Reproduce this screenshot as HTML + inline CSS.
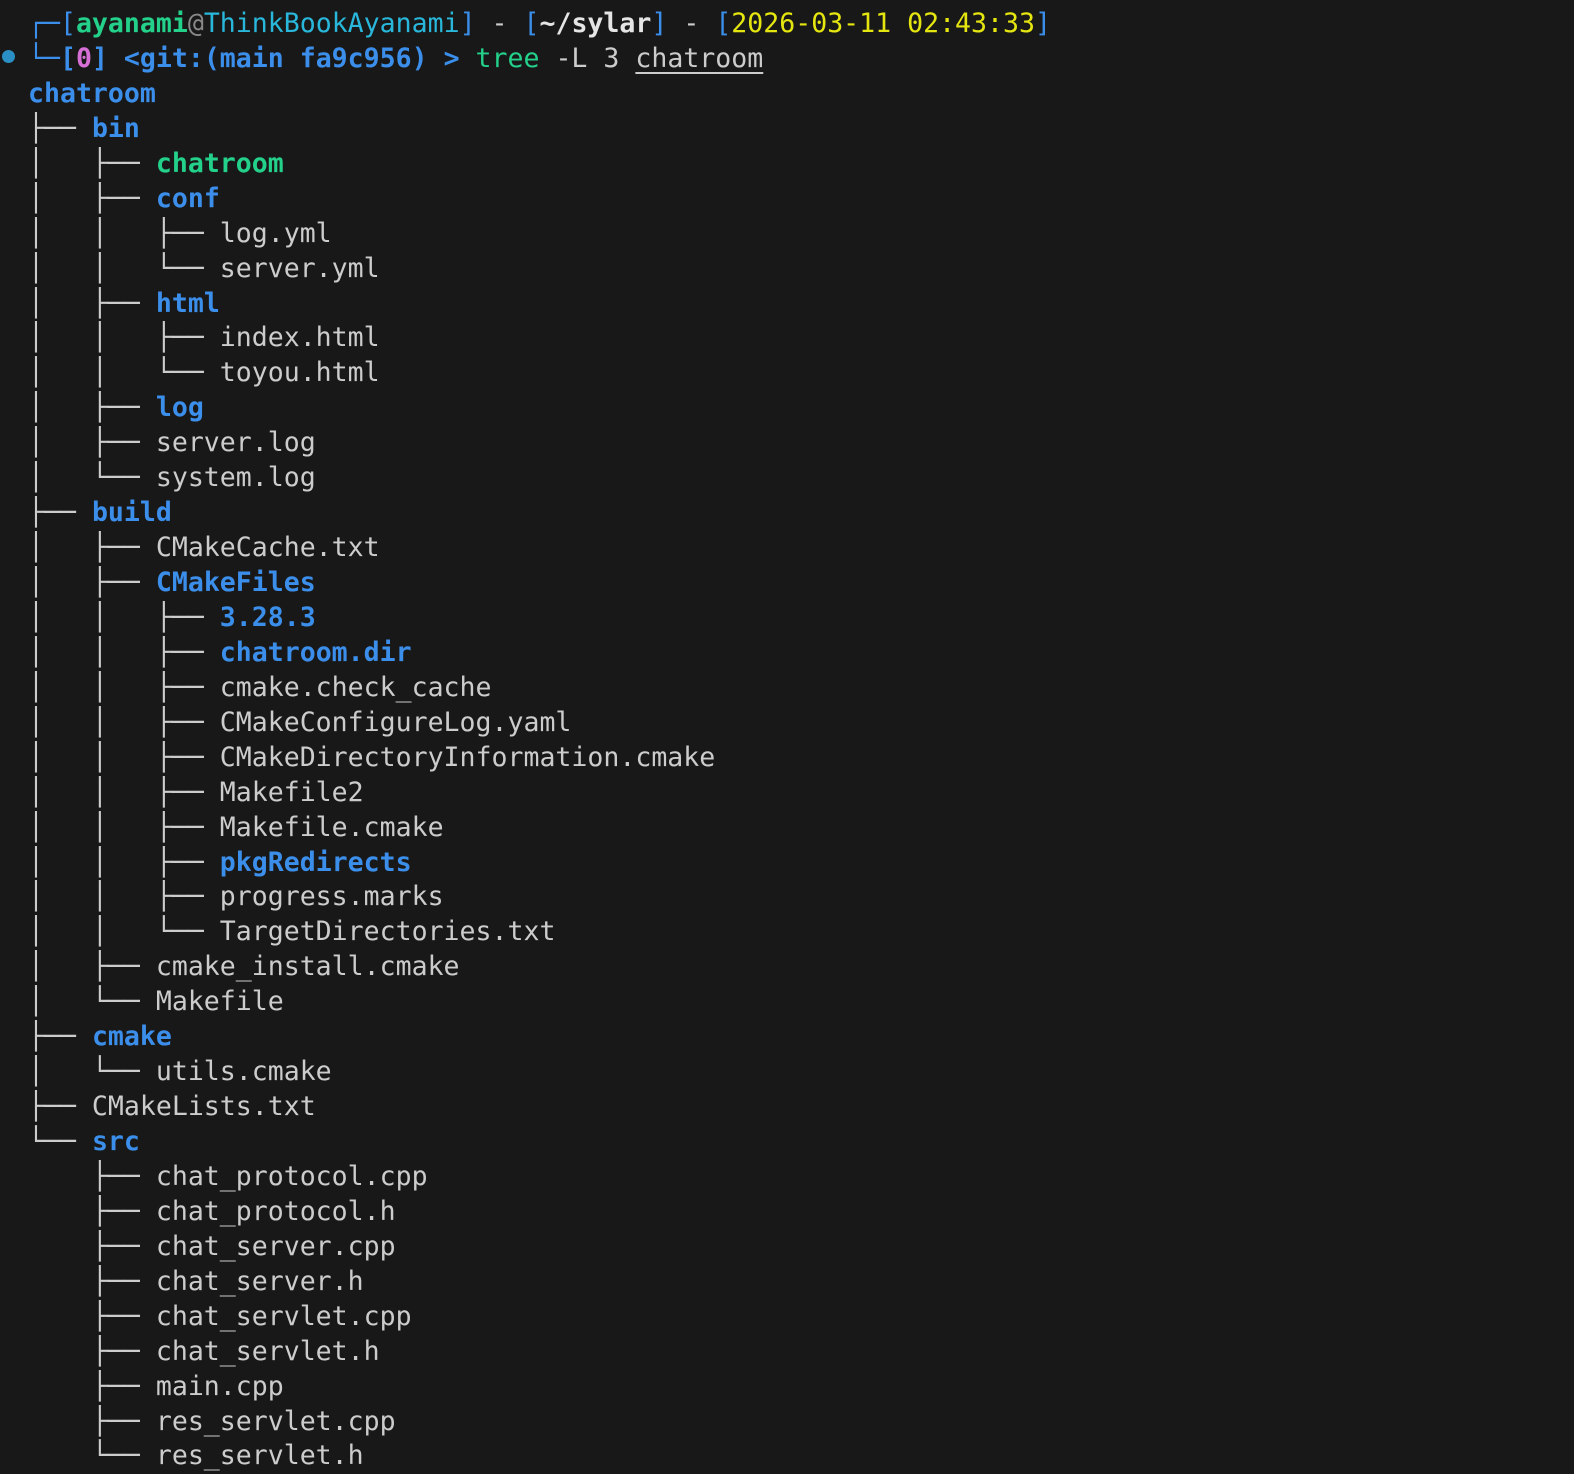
<!DOCTYPE html>
<html><head><meta charset="utf-8"><style>
html,body{margin:0;padding:0;background:#181818;width:1574px;height:1472px;overflow:hidden}
pre{margin:0;position:absolute;left:28px;top:7px;font-family:"DejaVu Sans Mono","Liberation Mono",monospace;font-size:26.55px;line-height:34.93px;color:#cccccc;white-space:pre}
.b{color:#3b8eea;font-weight:bold}
.g{color:#23d18b;font-weight:bold}
.gn{color:#23d18b}
.c{color:#29b8db}
.y{color:#e5e510}
.m{color:#d670d6;font-weight:bold}
.bl{color:#3b8eea}
.w{color:#e5e5e5;font-weight:bold}
u{text-decoration:underline;text-underline-offset:5px}
.dot{position:absolute;left:2px;top:50px;width:13px;height:13px;border-radius:50%;background:#2a8fc4}
</style></head><body>
<div class="dot"></div>
<pre><span class="bl">┌─[</span><span class="g">ayanami</span><span style="color:#888">@</span><span class="c">ThinkBookAyanami</span><span class="bl">]</span> - <span class="bl">[</span><span class="w">~/sylar</span><span class="bl">]</span> - <span class="bl">[</span><span class="y">2026-03-11 02:43:33</span><span class="bl">]</span>
<span class="bl">└─</span><span class="b">[</span><span class="m">0</span><span class="b">]</span> <span class="b">&lt;git:(main fa9c956)</span> <span class="b">&gt;</span> <span class="gn">tree</span> -L 3 <u>chatroom</u>
<span class="b">chatroom</span>
├── <span class="b">bin</span>
│   ├── <span class="g">chatroom</span>
│   ├── <span class="b">conf</span>
│   │   ├── log.yml
│   │   └── server.yml
│   ├── <span class="b">html</span>
│   │   ├── index.html
│   │   └── toyou.html
│   ├── <span class="b">log</span>
│   ├── server.log
│   └── system.log
├── <span class="b">build</span>
│   ├── CMakeCache.txt
│   ├── <span class="b">CMakeFiles</span>
│   │   ├── <span class="b">3.28.3</span>
│   │   ├── <span class="b">chatroom.dir</span>
│   │   ├── cmake.check_cache
│   │   ├── CMakeConfigureLog.yaml
│   │   ├── CMakeDirectoryInformation.cmake
│   │   ├── Makefile2
│   │   ├── Makefile.cmake
│   │   ├── <span class="b">pkgRedirects</span>
│   │   ├── progress.marks
│   │   └── TargetDirectories.txt
│   ├── cmake_install.cmake
│   └── Makefile
├── <span class="b">cmake</span>
│   └── utils.cmake
├── CMakeLists.txt
└── <span class="b">src</span>
    ├── chat_protocol.cpp
    ├── chat_protocol.h
    ├── chat_server.cpp
    ├── chat_server.h
    ├── chat_servlet.cpp
    ├── chat_servlet.h
    ├── main.cpp
    ├── res_servlet.cpp
    └── res_servlet.h
</pre>
</body></html>
